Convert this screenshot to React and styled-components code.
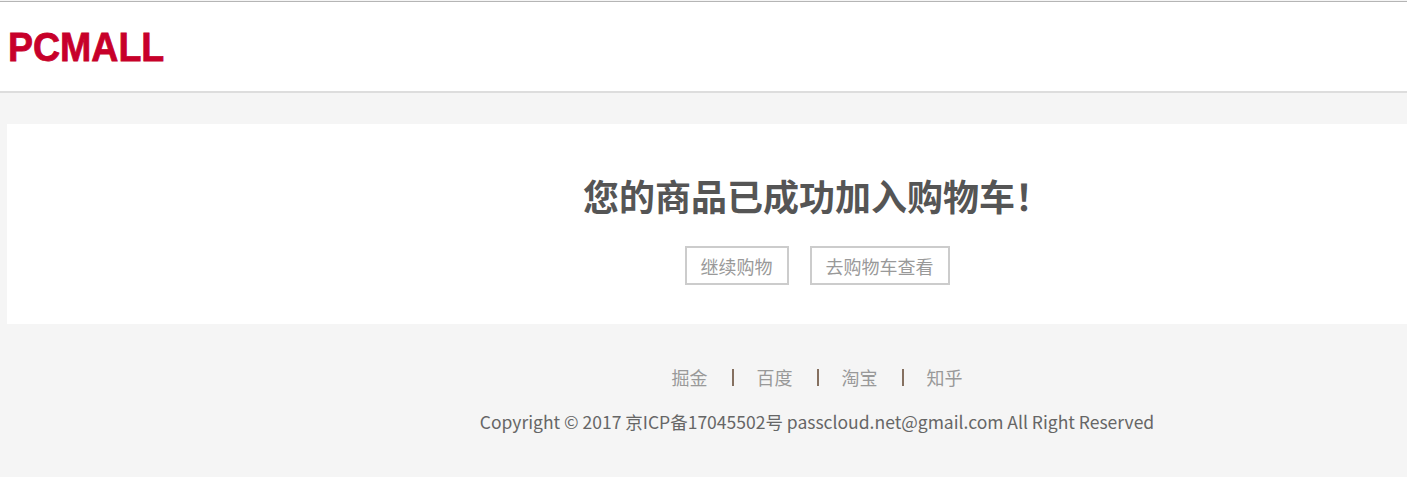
import styled, { createGlobalStyle } from "styled-components";

const GlobalStyle = createGlobalStyle`
    html, body {
        margin: 0;
        padding: 0;
        background: #f5f5f5;
        overflow: hidden;
    }
    body {
        font-family: "Noto Sans CJK SC", "Noto Sans", sans-serif;
    }
`;

const links = ["掘金", "百度", "淘宝", "知乎"];

export default function App() {
    return (
        <Page>
            <GlobalStyle />
            <Header>
                <Logo>PCMALL</Logo>
            </Header>
            <Card>
                <Title>您的商品已成功加入购物车！</Title>
                <Actions>
                    <Button>继续购物</Button>
                    <Button>去购物车查看</Button>
                </Actions>
            </Card>
            <Footer>
                <Links>
                    {links.map((name, index) => (
                        <LinkItem key={name}>
                            {index > 0 && <Divider />}
                            <FooterLink>{name}</FooterLink>
                        </LinkItem>
                    ))}
                </Links>
                <Copyright>Copyright © 2017 京ICP备17045502号 passcloud.net@gmail.com All Right Reserved</Copyright>
            </Footer>
        </Page>
    );
}

const Page = styled.div`
    width: 1634px;
    min-height: 477px;
    padding-top: 1px;
    background: #f5f5f5;
`;

const Header = styled.div`
    height: 89px;
    display: flex;
    align-items: center;
    background: #ffffff;
    border-top: 1px solid #b5b5b5;
    border-bottom: 2px solid #dddddd;
    padding-left: 8px;
`;

const Logo = styled.h1`
    margin: 2px 0 0;
    font-family: "Liberation Sans", Arial, sans-serif;
    font-weight: bold;
    font-size: 41px;
    color: #c7002a;
    transform: scaleX(0.915);
    transform-origin: left center;
    -webkit-text-stroke: 0.8px #c7002a;
`;

const Card = styled.div`
    margin: 31px 0 0 7px;
    width: 1620px;
    height: 200px;
    background: #ffffff;
    display: flex;
    flex-direction: column;
    align-items: center;
    box-sizing: border-box;
    padding-top: 46px;
`;

const Title = styled.h2`
    margin: 0;
    font-size: 36px;
    line-height: 50px;
    font-weight: bold;
    color: #555555;
`;

const Actions = styled.div`
    display: flex;
    gap: 21px;
    margin-top: 26px;
`;

const Button = styled.button`
    height: 39px;
    padding: 0 14px;
    background: #ffffff;
    border: 2px solid #cccccc;
    font-family: "Noto Sans CJK SC", sans-serif;
    font-size: 18px;
    color: #999999;
    cursor: pointer;
`;

const Footer = styled.div`
    display: flex;
    flex-direction: column;
    align-items: center;
    padding-top: 39px;
`;

const Links = styled.div`
    display: flex;
    align-items: center;
    height: 28px;
`;

const LinkItem = styled.div`
    display: flex;
    align-items: center;
`;

const Divider = styled.span`
    width: 2px;
    height: 17px;
    margin: 0 23px 0 24px;
    background: #857060;
`;

const FooterLink = styled.a`
    font-size: 18px;
    color: #999999;
    text-decoration: none;
`;

const Copyright = styled.p`
    margin: 17px 0 0;
    font-size: 17.5px;
    line-height: 28px;
    color: #666666;
`;
